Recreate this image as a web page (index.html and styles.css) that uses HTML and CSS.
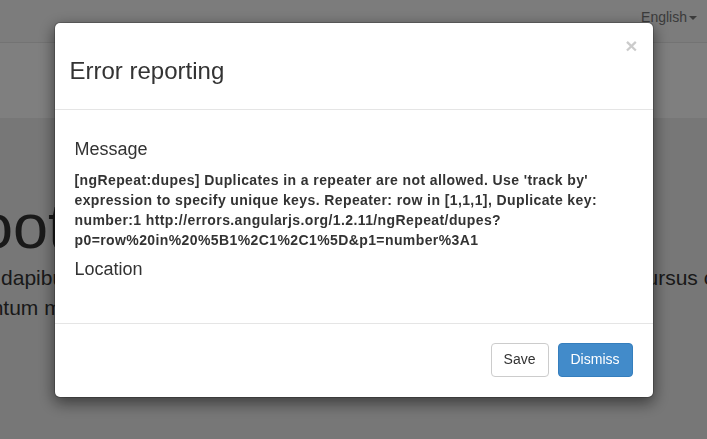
FILE: index.html
```html
<!DOCTYPE html>
<html lang="en">
<head>
<meta charset="utf-8">
<title>Error reporting</title>
<link rel="stylesheet" href="styles.css">
</head>
<body>
<div class="page">
  <nav class="navbar">
    <a class="lang" href="#">English<span class="caret"></span></a>
  </nav>
  <div class="spacer"></div>
  <div class="jumbotron">
    <div class="jumbo-inner">
      <h1 class="jumbo-title">Bootstrap</h1>
      <p class="lead">Fusce dapibus, tellus ac cursus commodo, tortor mauris condimentum nec cursus commodo, tortor mauris<br>fermentum massa justo sit amet risus.</p>
    </div>
  </div>
</div>

<div class="backdrop"></div>

<div class="modal">
  <div class="modal-dialog">
    <div class="modal-content">
      <div class="modal-header">
        <button class="close" type="button">&times;</button>
        <h3 class="modal-title">Error reporting</h3>
      </div>
      <div class="modal-body">
        <h4 class="section-title">Message</h4>
        <div class="message">[ngRepeat:dupes] Duplicates in a repeater are not allowed. Use 'track by' expression to specify unique keys. Repeater: row in [1,1,1], Duplicate key: number:1 http://errors.angularjs.org/1.2.11/ngRepeat/dupes?p0=row%20in%20%5B1%2C1%2C1%5D&amp;p1=number%3A1</div>
        <h4 class="section-title">Location</h4>
      </div>
      <div class="modal-footer">
        <button class="btn btn-default" type="button">Save</button>
        <button class="btn btn-primary" type="button">Dismiss</button>
      </div>
    </div>
  </div>
</div>
</body>
</html>
```

FILE: styles.css
```css
html, body {
  margin: 0;
  padding: 0;
  height: 100%;
  overflow: hidden;
}

body {
  font-family: "Liberation Sans", Arial, Helvetica, sans-serif;
  font-size: 14px;
  line-height: 1.428571;
  color: #333;
  background: #fff;
}

.page {
  display: flex;
  flex-direction: column;
  height: 100%;
}

.navbar {
  height: 42px;
  background: #f8f8f8;
  border-bottom: 1px solid #e7e7e7;
  display: flex;
  justify-content: flex-end;
  align-items: flex-start;
  flex-shrink: 0;
}

.lang {
  color: #777;
  text-decoration: none;
  padding: 7px 10px 0 0;
  line-height: 20px;
  display: flex;
  align-items: center;
}

.caret {
  display: inline-block;
  width: 0;
  height: 0;
  margin-left: 2px;
  margin-top: 1px;
  border-top: 4px solid #777;
  border-left: 4px solid transparent;
  border-right: 4px solid transparent;
}

.spacer {
  height: 75px;
  flex-shrink: 0;
}

.jumbotron {
  flex: 1;
  background: #eee;
  padding-top: 30px;
  overflow: hidden;
}

.jumbo-inner {
  margin-left: -62px;
  white-space: nowrap;
}

.jumbo-title {
  font-size: 63px;
  font-weight: 500;
  line-height: 1;
  margin: 47px 0 0 -2px;
}

.lead {
  font-size: 21px;
  line-height: 30px;
  margin: 5px 0 0;
}

.backdrop {
  position: fixed;
  inset: 0;
  background: rgba(0, 0, 0, 0.5);
}

.modal {
  position: fixed;
  inset: 0;
}

.modal-dialog {
  width: 600px;
  margin: 22px auto 0;
}

.modal-content {
  background: #fff;
  border: 1px solid rgba(0, 0, 0, 0.2);
  border-radius: 6px;
  box-shadow: 0 5px 15px rgba(0, 0, 0, 0.5);
  background-clip: padding-box;
}

.modal-header {
  padding: 15px;
  border-bottom: 1px solid #e5e5e5;
}

.close {
  float: right;
  margin-top: -3px;
  padding: 0;
  border: 0;
  background: transparent;
  font-family: inherit;
  font-size: 21px;
  font-weight: bold;
  line-height: 1;
  color: #000;
  opacity: 0.2;
  text-shadow: 0 1px 0 #fff;
  cursor: pointer;
}

.modal-title {
  margin: 20px 0 10px;
  font-size: 24px;
  font-weight: 500;
  line-height: 1.1;
}

.modal-body {
  padding: 20px;
}

.section-title {
  margin: 10px 0;
  font-size: 18px;
  font-weight: 500;
  line-height: 1.1;
}

.message {
  font-weight: bold;
  line-height: 20px;
  letter-spacing: 0.4px;
  word-wrap: break-word;
}

.modal-footer {
  margin-top: 13px;
  padding: 19px 20px 20px;
  border-top: 1px solid #e5e5e5;
  display: flex;
  justify-content: flex-end;
  gap: 9px;
}

.btn {
  font-family: inherit;
  font-size: 14px;
  line-height: 1.428571;
  padding: 6px 12px;
  border-radius: 4px;
  border: 1px solid transparent;
  cursor: pointer;
}

.btn-default {
  background: #fff;
  border-color: #ccc;
  color: #333;
}

.btn-primary {
  background: #428bca;
  border-color: #357ebd;
  color: #fff;
}
```
